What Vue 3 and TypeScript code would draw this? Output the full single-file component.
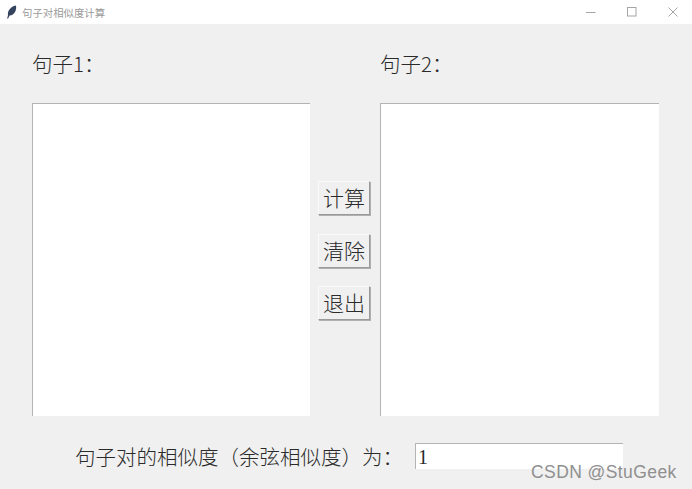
<script setup lang="ts">
const actions: string[] = ['计算', '清除', '退出']
</script>

<template>
  <div class="window">
    <header class="titlebar">
      <div class="title">
        <svg class="feather" width="11" height="14" viewBox="0 0 11 14">
          <path d="M1.2 13.6 L2 10 C1.4 6 4.4 1.4 10 0.4 C10.8 5 8.8 9.8 3.6 10.6 L2 13.8 Z" fill="#34445f" />
        </svg>
        <span>句子对相似度计算</span>
      </div>
      <div class="controls">
        <svg width="10" height="10" viewBox="0 0 10 10"><path d="M0 5.5H9.5" stroke="#a5a5a5" fill="none" /></svg>
        <svg width="10" height="10" viewBox="0 0 10 10"><rect x="0.5" y="0.5" width="8.5" height="8.5" stroke="#a5a5a5" fill="none" /></svg>
        <svg width="10" height="10" viewBox="0 0 10 10"><path d="M0.5 0.5L9.5 9.5M9.5 0.5L0.5 9.5" stroke="#a5a5a5" fill="none" /></svg>
      </div>
    </header>

    <main class="content">
      <section class="columns">
        <div class="column">
          <label class="label">句子1：</label>
          <div class="textbox"></div>
        </div>
        <div class="actions">
          <button v-for="action in actions" :key="action" class="action" type="button">{{ action }}</button>
        </div>
        <div class="column">
          <label class="label">句子2：</label>
          <div class="textbox"></div>
        </div>
      </section>

      <section class="result">
        <span class="result-label">句子对的相似度（余弦相似度）为：</span>
        <div class="entry">1</div>
      </section>
    </main>

    <span class="watermark">CSDN @StuGeek</span>
  </div>
</template>

<style>
html,
body {
  margin: 0;
  background: #f0f0f0;
}
</style>

<style scoped>
.window {
  position: relative;
  width: 692px;
  height: 489px;
  overflow: hidden;
  display: flex;
  flex-direction: column;
  background: #f0f0f0;
  color: #2a2a2a;
  font-family: "Noto Sans CJK SC", "Liberation Serif", serif;
  text-spacing-trim: space-all;
}

.titlebar {
  height: 24px;
  flex: none;
  display: flex;
  align-items: center;
  justify-content: space-between;
  background: #fff;
}

.title {
  display: flex;
  align-items: center;
  gap: 5px;
  padding-left: 6px;
  font-size: 10.4px;
  color: #9a9a9a;
  font-family: "Noto Sans CJK SC", sans-serif;
}

.controls {
  display: flex;
  gap: 31px;
  padding-right: 14px;
}

.content {
  flex: 1;
  display: flex;
  flex-direction: column;
  padding: 0 33px 0 32px;
}

.columns {
  display: grid;
  grid-template-columns: 278px 70px 279px;
  height: 392px;
}

.column {
  display: flex;
  flex-direction: column;
}

.label {
  height: 79px;
  padding-top: 24px;
  box-sizing: border-box;
  font-size: 20.5px;
  line-height: 30px;
  font-weight: 300;
}

.textbox {
  height: 313px;
  box-sizing: border-box;
  background: #fff;
  border-top: 1px solid #b4b4b4;
  border-left: 1px solid #b4b4b4;
}

.actions {
  display: flex;
  flex-direction: column;
  align-items: flex-start;
  gap: 18.5px;
  padding-top: 157px;
  padding-left: 8px;
}

.action {
  width: 52px;
  height: 34px;
  padding: 0 0 3px;
  box-sizing: border-box;
  background: #f0f0f0;
  border: 1px solid;
  border-color: #fafafa #9a9a9a #9a9a9a #fafafa;
  box-shadow: 1px 1px 0 #b0b0b0;
  color: #2a2a2a;
  font-family: inherit;
  font-size: 21px;
  line-height: 30px;
  font-weight: 300;
}

.result {
  display: flex;
  align-items: center;
  margin-top: 27px;
  padding-left: 43px;
}

.result-label {
  width: 340px;
  font-size: 20.5px;
  line-height: 26px;
  font-weight: 300;
  white-space: nowrap;
}

.entry {
  width: 208px;
  height: 26px;
  box-sizing: border-box;
  padding-left: 2px;
  background: #fff;
  border-top: 1px solid #b4b4b4;
  border-left: 1px solid #b4b4b4;
  font-family: "Liberation Serif", serif;
  font-size: 20px;
  line-height: 26px;
}

.watermark {
  position: absolute;
  left: 531px;
  top: 462px;
  font-family: "Liberation Sans", sans-serif;
  font-size: 17.5px;
  line-height: 20px;
  letter-spacing: 0.42px;
  color: #8f8f8f;
  white-space: nowrap;
}
</style>
